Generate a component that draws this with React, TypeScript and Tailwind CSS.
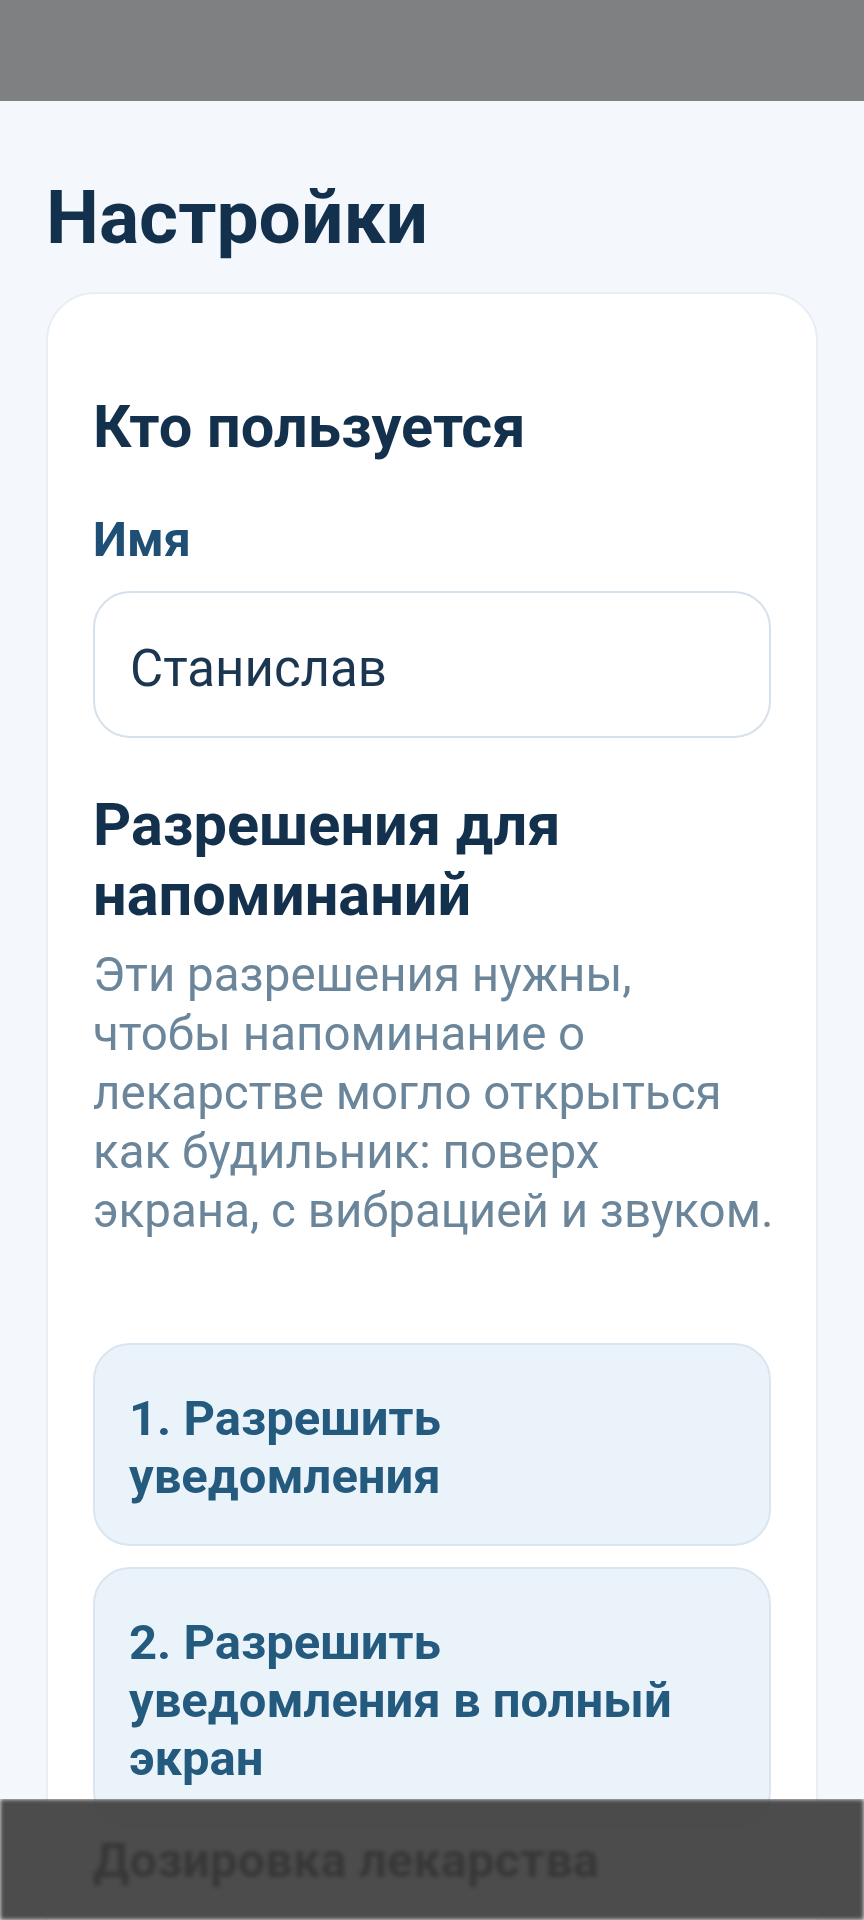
import React from "react";

function PermissionButton({ lines }: { lines: string[] }) {
  return (
    <button
      type="button"
      className="w-full rounded-[37px] border-2 border-[#d9e5f0] bg-[#ebf3fa] pb-[38px] pl-[34px] pr-[34px] pt-[45px] text-left text-[49px] font-bold leading-[58px] text-[#245a7e]"
    >
      {lines.map((l, i) => (
        <span key={i} className="block whitespace-nowrap">
          {l}
        </span>
      ))}
    </button>
  );
}

export default function App() {
  const body = [
    "Эти разрешения нужны,",
    "чтобы напоминание о",
    "лекарстве могло открыться",
    "как будильник: поверх",
    "экрана, с вибрацией и звуком.",
  ];
  return (
    <div className="relative h-[1920px] w-full overflow-hidden bg-[#f4f8fc] font-['Roboto','Noto_Sans',sans-serif]">
      <div className="h-[101px] bg-[#7f8081]" />
      <div className="px-[46px] pt-[72px]">
        <h1 className="text-[75px] font-bold leading-[88px] text-[#13314d]">Настройки</h1>
        <div className="mt-[31px] rounded-[49px] border-2 border-[#e7eef6] bg-white px-[45px] pb-[200px] pt-[98px]">
          <h2 className="text-[59.5px] font-bold leading-[70px] text-[#13314d]">Кто пользуется</h2>
          <div className="mt-[49px] text-[48.5px] font-bold leading-[57px] text-[#1f4f74]">Имя</div>
          <div className="mt-[23px] flex h-[147px] items-center rounded-[37px] border-2 border-[#d5e1ec] bg-white pl-[35px] pt-[8px] text-[51px] leading-[56px] text-[#1b3651]">
            Станислав
          </div>
          <h2 className="mt-[52px] text-[59.5px] font-bold leading-[70px] text-[#13314d]">
            <span className="block">Разрешения для</span>
            <span className="block">напоминаний</span>
          </h2>
          <p className="mt-[16px] text-[47.5px] leading-[59px] text-[#6b869b]">
            {body.map((l, i) => (
              <span key={i} className="block whitespace-nowrap">
                {l}
              </span>
            ))}
          </p>
          <div className="mt-[102px] flex flex-col gap-[21px]">
            <PermissionButton lines={["1. Разрешить", "уведомления"]} />
            <PermissionButton lines={["2. Разрешить", "уведомления в полный", "экран"]} />
          </div>
          <h2 className="mt-[4px] text-[49px] font-bold leading-[58px] text-[#13314d]">Дозировка лекарства</h2>
        </div>
      </div>
      <div className="absolute bottom-0 left-0 right-0 h-[121px] [backdrop-filter:grayscale(1)_contrast(0.2)_brightness(0.5)_blur(2px)]" />
    </div>
  );
}
